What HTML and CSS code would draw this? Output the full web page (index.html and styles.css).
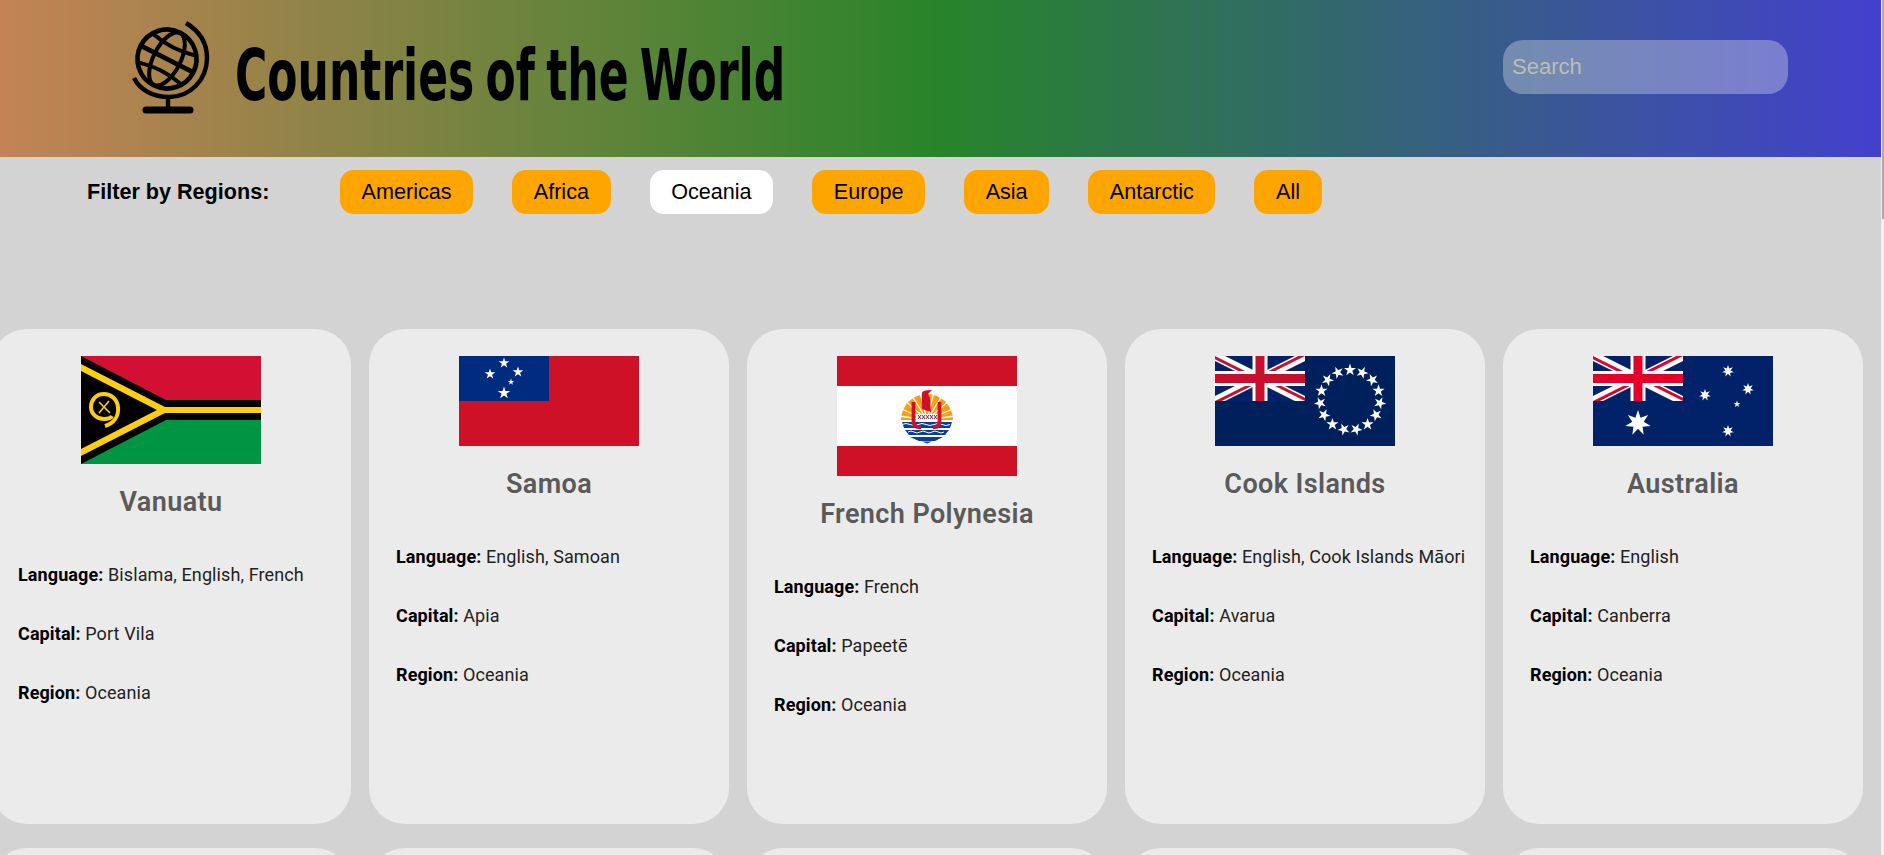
FILE: index.html
```html
<!DOCTYPE html>
<html lang="en">
  <head>
    <meta charset="UTF-8" />
    <title>Countries of the World</title>
    <link rel="stylesheet" href="styles.css">
  </head>
  <body>
    <svg class="svg-defs" width="0" height="0" aria-hidden="true">
      <defs>
        <polygon id="star5" points="0,-1 .225,-.309 .951,-.309 .363,.118 .588,.809 0,.382 -.588,.809 -.363,.118 -.951,-.309 -.225,-.309" fill="#fff" />
        <polygon id="star7" points="0,-1 .195,-.405 .782,-.623 .439,-.1 .975,.223 .352,.28 .434,.901 0,.45 -.434,.901 -.352,.28 -.975,.223 -.439,-.1 -.782,-.623 -.195,-.405" fill="#fff" />
        <clipPath id="jack-clip"><rect width="60" height="30" /></clipPath>
        <clipPath id="jack-diag"><path d="M30,15 h30 v15 z v15 h-30 z h-30 v-15 z v-15 h30 z" /></clipPath>
        <g id="union-jack" clip-path="url(#jack-clip)">
          <rect width="60" height="30" fill="#012169" />
          <path d="M0,0 L60,30 M60,0 L0,30" stroke="#fff" stroke-width="6" />
          <path d="M0,0 L60,30 M60,0 L0,30" stroke="#e4002b" stroke-width="4" clip-path="url(#jack-diag)" />
          <path d="M30,0 v30 M0,15 h60" stroke="#fff" stroke-width="10" />
          <path d="M30,0 v30 M0,15 h60" stroke="#e4002b" stroke-width="6" />
        </g>
        <g id="union-jack-cook" clip-path="url(#jack-clip)">
          <rect width="60" height="30" fill="#012169" />
          <path d="M0,0 L60,30 M60,0 L0,30" stroke="#fff" stroke-width="6" />
          <path d="M0,0 L60,30 M60,0 L0,30" stroke="#c8102e" stroke-width="4" clip-path="url(#jack-diag)" />
          <path d="M30,0 v30 M0,15 h60" stroke="#fff" stroke-width="10" />
          <path d="M30,0 v30 M0,15 h60" stroke="#c8102e" stroke-width="6" />
        </g>
      </defs>
    </svg>

    <div class="page">
      <header class="top-bar">
        <div class="brand">
          <svg class="logo" viewBox="0 0 100 105" width="100" height="105">
            <g fill="none" stroke="#000" stroke-width="4">
              <g transform="rotate(27 42 43)">
                <circle cx="42" cy="43" r="29.5" stroke-width="4.6" />
                <ellipse cx="42" cy="43" rx="13.5" ry="29" />
                <path d="M13,43 H71" stroke-width="4.6" />
                <path d="M18,27 Q42,33 66,27" />
                <path d="M18,59 Q42,53 66,59" />
              </g>
              <path d="M61,7 C76,16 82,29 82,42 C82,64 65,81 44,81 C28,81 15,74 9,62" stroke-width="4.4" />
              <path d="M43,81 V92" stroke-width="4.4" />
              <path d="M21,94 H65" stroke-width="7" stroke-linecap="round" />
            </g>
          </svg>
          <h1 class="site-title">Countries of the World</h1>
        </div>
        <input class="search" type="text" placeholder="Search" />
      </header>

      <div class="filters">
        <span class="filter-label">Filter by Regions:</span>
        <div class="filter-list">
          <button class="region-btn">Americas</button>
          <button class="region-btn">Africa</button>
          <button class="region-btn active">Oceania</button>
          <button class="region-btn">Europe</button>
          <button class="region-btn">Asia</button>
          <button class="region-btn">Antarctic</button>
          <button class="region-btn">All</button>
        </div>
      </div>

      <main class="cards">
        <article class="card">
          <svg class="flag" viewBox="0 0 180 108" width="180" height="108">
            <rect width="180" height="54" fill="#d21034" />
            <rect y="54" width="180" height="54" fill="#009543" />
            <path d="M0,0 L85,44 H180 V64 H85 L0,108 Z" fill="#000" />
            <path d="M0,8 L84,51 H180 V57 H84 L0,100 V93 L76,54 L0,15 Z" fill="#fdce12" />
            <path d="M24,70 C33,67 38,60 37,51 C36,43 30,38 23,38 C15,38 10,44 10,51 C10,58 16,63 23,63 C27,63 30,62 31,60" fill="none" stroke="#fdce12" stroke-width="4" />
            <path d="M18,46 L29,57 M28,45 L18,57" stroke="#fdce12" stroke-width="1.6" />
          </svg>
          <h3 class="country-name">Vanuatu</h3>
          <p><strong>Language:</strong> Bislama, English, French</p>
          <p><strong>Capital:</strong> Port Vila</p>
          <p><strong>Region:</strong> Oceania</p>
        </article>

        <article class="card">
          <svg class="flag" viewBox="0 0 180 90" width="180" height="90">
            <rect width="180" height="90" fill="#ce1126" />
            <rect width="90" height="45" fill="#002b7f" />
            <use href="#star5" transform="translate(45 7) scale(5.6)" />
            <use href="#star5" transform="translate(31 18) scale(5.6)" />
            <use href="#star5" transform="translate(59 16) scale(5.6)" />
            <use href="#star5" transform="translate(52 26) scale(3.4)" />
            <use href="#star5" transform="translate(45 37) scale(6.6)" />
          </svg>
          <h3 class="country-name">Samoa</h3>
          <p><strong>Language:</strong> English, Samoan</p>
          <p><strong>Capital:</strong> Apia</p>
          <p><strong>Region:</strong> Oceania</p>
        </article>

        <article class="card">
          <svg class="flag" viewBox="0 0 180 120" width="180" height="120">
            <rect width="180" height="120" fill="#ce1126" />
            <rect y="30" width="180" height="60" fill="#fff" />
            <path d="M64,64 A26,26 0 0 1 116,64 Z" fill="#ff9c10" />
            <path d="M90,64 L62,52 M90,64 L65,42 M90,64 L72,35 M90,64 L82,32 M90,64 L98,32 M90,64 L108,35 M90,64 L115,42 M90,64 L118,52 M90,64 L62,60 M90,64 L118,60" stroke="#fff" stroke-width="1.3" />
            <path d="M65,66 H115 L113,72 H67 Z M68,74 H112 L108,79 H72 Z M73,81 H106 L98,85 H82 Z M85,85.5 H95 L90,87.5 Z" fill="#083d9c" />
            <path d="M65,68.5 q4,-2 8,0 t8,0 t8,0 t8,0 t8,0 t8,0 M71,76 q3,-2 6,0 t6,0 t6,0 t6,0 t6,0 t6,0" fill="none" stroke="#fff" stroke-width="1" />
            <rect x="79" y="58" width="22" height="7" fill="#fff" />
            <path d="M81,59 l3,4 m0,-4 l-3,4 M85,59 l3,4 m0,-4 l-3,4 M89,59 l3,4 m0,-4 l-3,4 M93,59 l3,4 m0,-4 l-3,4 M97,59 l3,4 m0,-4 l-3,4" stroke="#8f1a2a" stroke-width="1" />
            <path d="M76.5,46 V65 Q76.5,72 84,71 M102.5,46 V65 Q102.5,72 96,71" fill="none" stroke="#ce1126" stroke-width="3.8" />
            <path d="M85,37 Q85,34 95,34 L91,38 L93,42 L94,56 L85,53 Z" fill="#ce1126" />
          </svg>
          <h3 class="country-name">French Polynesia</h3>
          <p><strong>Language:</strong> French</p>
          <p><strong>Capital:</strong> Papeetē</p>
          <p><strong>Region:</strong> Oceania</p>
        </article>

        <article class="card">
          <svg class="flag" viewBox="0 0 180 90" width="180" height="90">
            <rect width="180" height="90" fill="#00205b" />
            <use href="#union-jack-cook" transform="scale(1.5)" />
            <use href="#star5" transform="translate(135 14) scale(6.4)" />
            <use href="#star5" transform="translate(147.2 16.6) rotate(24) scale(6.4)" />
            <use href="#star5" transform="translate(157.3 23.9) rotate(48) scale(6.4)" />
            <use href="#star5" transform="translate(163.5 34.7) rotate(72) scale(6.4)" />
            <use href="#star5" transform="translate(164.8 47.1) rotate(96) scale(6.4)" />
            <use href="#star5" transform="translate(161 59) rotate(120) scale(6.4)" />
            <use href="#star5" transform="translate(152.6 68.3) rotate(144) scale(6.4)" />
            <use href="#star5" transform="translate(141.2 73.3) rotate(168) scale(6.4)" />
            <use href="#star5" transform="translate(128.8 73.3) rotate(192) scale(6.4)" />
            <use href="#star5" transform="translate(117.4 68.3) rotate(216) scale(6.4)" />
            <use href="#star5" transform="translate(109 59) rotate(240) scale(6.4)" />
            <use href="#star5" transform="translate(105.2 47.1) rotate(264) scale(6.4)" />
            <use href="#star5" transform="translate(106.5 34.7) rotate(288) scale(6.4)" />
            <use href="#star5" transform="translate(112.7 23.9) rotate(312) scale(6.4)" />
            <use href="#star5" transform="translate(122.8 16.6) rotate(336) scale(6.4)" />
          </svg>
          <h3 class="country-name">Cook Islands</h3>
          <p><strong>Language:</strong> English, Cook Islands Māori</p>
          <p><strong>Capital:</strong> Avarua</p>
          <p><strong>Region:</strong> Oceania</p>
        </article>

        <article class="card">
          <svg class="flag" viewBox="0 0 180 90" width="180" height="90">
            <rect width="180" height="90" fill="#012169" />
            <use href="#union-jack" transform="scale(1.5)" />
            <use href="#star7" transform="translate(45 67) scale(13)" />
            <use href="#star7" transform="translate(135 15) scale(6)" />
            <use href="#star7" transform="translate(112 39) scale(6)" />
            <use href="#star7" transform="translate(155 33) scale(6)" />
            <use href="#star5" transform="translate(144 48) scale(3.6)" />
            <use href="#star7" transform="translate(135 75) scale(6)" />
          </svg>
          <h3 class="country-name">Australia</h3>
          <p><strong>Language:</strong> English</p>
          <p><strong>Capital:</strong> Canberra</p>
          <p><strong>Region:</strong> Oceania</p>
        </article>

        <article class="card"></article>
        <article class="card"></article>
        <article class="card"></article>
        <article class="card"></article>
        <article class="card"></article>
      </main>

      <div class="scroll-track"><div class="scroll-thumb"></div></div>
    </div>
  </body>
</html>
```

FILE: styles.css
```css
html,
body {
  margin: 0;
  height: 100%;
  overflow: hidden;
}

body {
  font-family: "Liberation Sans", Arial, sans-serif;
  background: #d3d3d3;
}

.svg-defs {
  position: absolute;
}

.page {
  position: relative;
  height: 855px;
  overflow: hidden;
}

.top-bar {
  display: flex;
  align-items: center;
  justify-content: space-between;
  height: 157px;
  padding-left: 125px;
  padding-right: 93px;
  width: 1881px;
  box-sizing: border-box;
  background: linear-gradient(to right, #c48355, #27842a 50%, #4340cd);
}

.brand {
  display: flex;
  align-items: center;
}

.logo {
  display: block;
  margin-top: -20px;
}

/* the original is a brush font, so squeeze a tall bold one to the same box */
.site-title {
  margin: -8px 0 0 10px;
  font-family: "DejaVu Sans Condensed", "DejaVu Sans", sans-serif;
  font-size: 72px;
  font-weight: 700;
  color: #000;
  white-space: nowrap;
  word-spacing: -6px;
  transform: scaleX(0.68);
  transform-origin: left center;
  width: 550px;
}

.search {
  width: 285px;
  height: 54px;
  padding: 0 9px;
  box-sizing: border-box;
  border: none;
  border-radius: 20px;
  background: rgba(255, 255, 255, 0.3);
  font-family: "Liberation Sans", Arial, sans-serif;
  font-size: 22px;
  color: #333;
  margin-top: -23px;
}

.search::placeholder {
  color: #bdbdb3;
}

.filters {
  display: flex;
  align-items: center;
  padding: 13px 0 0 87px;
}

.filter-label {
  width: 253px;
  font-size: 21.6px;
  font-weight: 700;
  color: #000;
}

.filter-list {
  display: flex;
  gap: 39px;
}

.region-btn {
  height: 44px;
  padding: 0 21.6px;
  border: none;
  border-radius: 14px;
  background: orange;
  font-family: "Liberation Sans", Arial, sans-serif;
  font-size: 21.6px;
  color: #000;
}

.region-btn.active {
  background: #fff;
}

.cards {
  display: grid;
  grid-template-columns: repeat(5, 360px);
  grid-auto-rows: 495px;
  gap: 24px 18px;
  margin: 115px 0 0 -9px;
}

.card {
  padding: 27px;
  box-sizing: border-box;
  border-radius: 36px;
  background: #ebebeb;
  font-family: Roboto, sans-serif;
  font-size: 18px;
  letter-spacing: 0.1px;
  color: #222;
}

.flag {
  display: block;
  margin: 0 auto;
}

.country-name {
  margin: 22px 0 46px;
  font-size: 27px;
  font-weight: 600;
  letter-spacing: 0.4px;
  line-height: 32px;
  text-align: center;
  color: #5a5a5a;
}

.card p {
  margin: 0 0 38px;
  line-height: 21px;
  white-space: nowrap;
}

.card strong {
  color: #000;
}

.scroll-track {
  position: absolute;
  top: 0;
  right: 0;
  bottom: 0;
  width: 3px;
  background: #f1f1f1;
}

.scroll-thumb {
  width: 2px;
  height: 219px;
  margin-left: 1px;
  background: #ababab;
}
```
